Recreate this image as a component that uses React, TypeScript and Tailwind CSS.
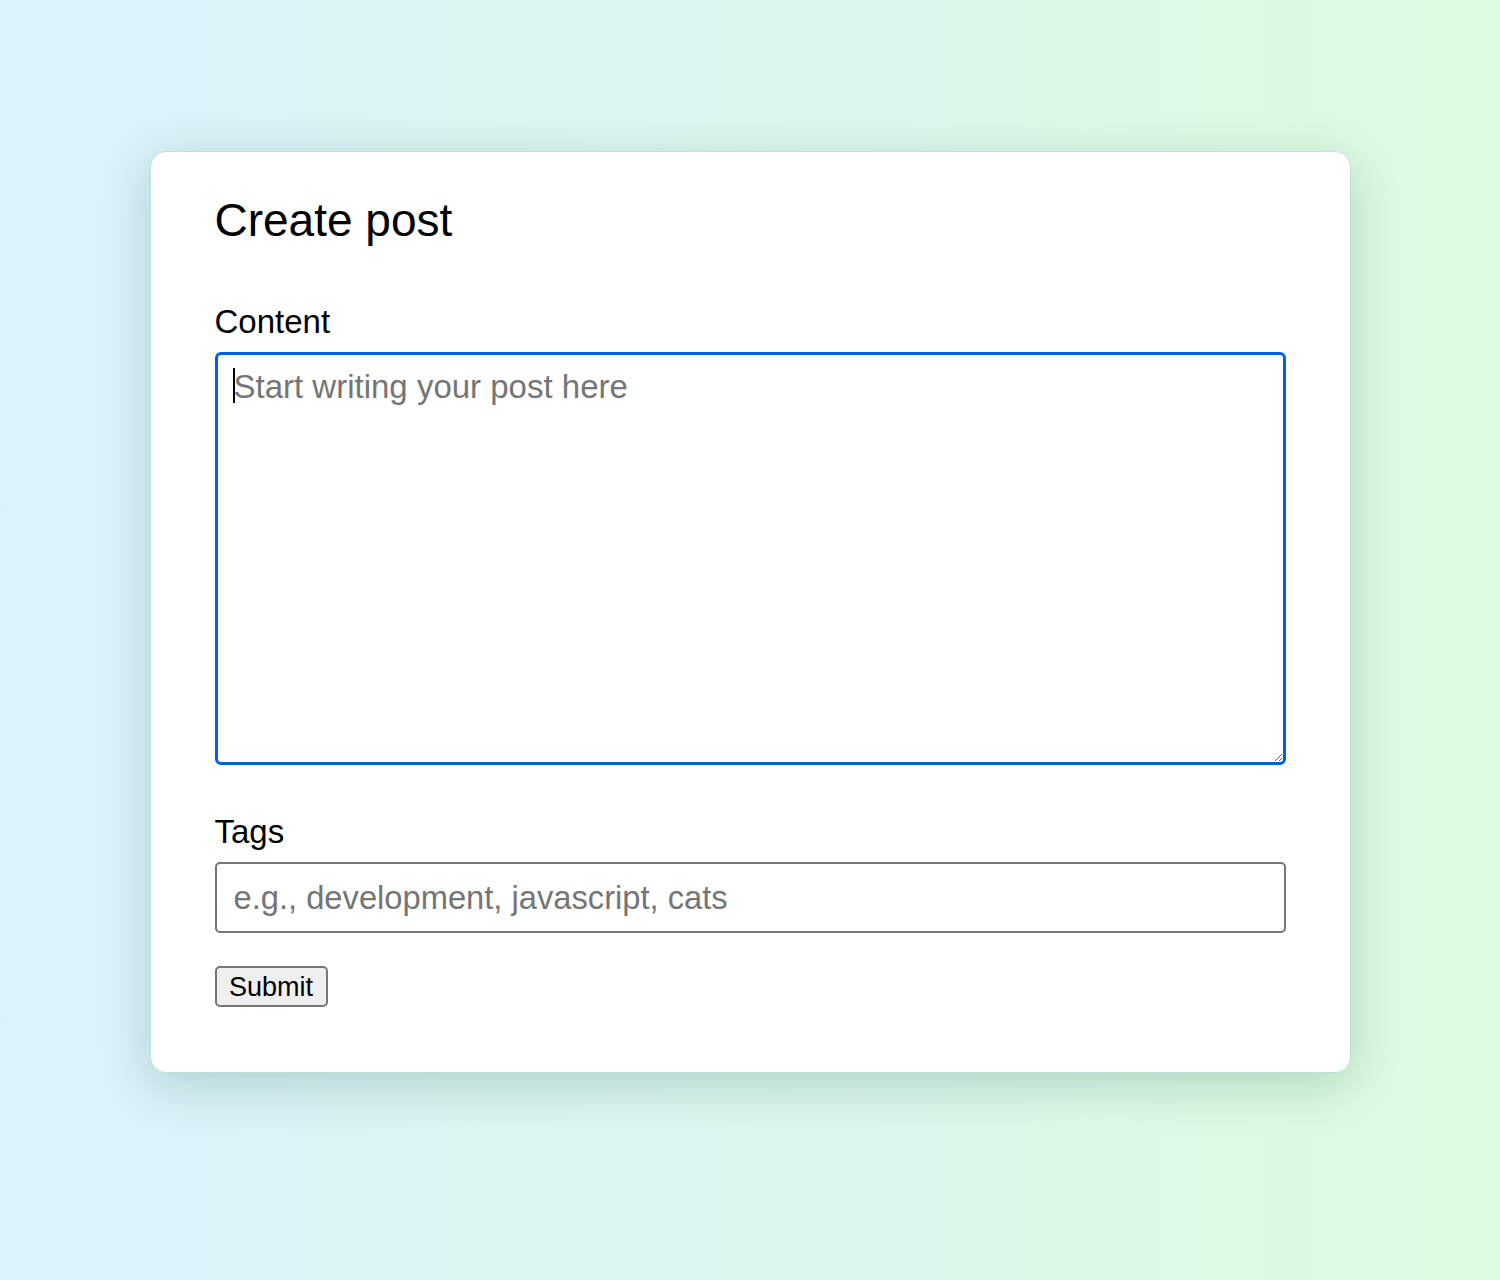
import React from "react";

export default function App() {
  return (
    <div
      className="min-h-screen w-full bg-gradient-to-r from-[#daf2fc] to-[#ddfcdf] pt-[151px] pb-[100px]"
      style={{ fontFamily: '"Liberation Sans", Arial, Helvetica, sans-serif' }}
    >
      <div className="mx-auto w-[1201px] rounded-[16px] border border-[#c4ddd6] bg-white px-[64px] pt-[42px] pb-[65px] shadow-[0_12px_50px_rgba(0,70,50,0.2)]">
        <h1 className="text-[46px] leading-[52px] text-black font-normal">Create post</h1>

        <label className="mt-[57px] block text-[33px] leading-[37px] text-black">Content</label>
        <div className="relative mt-[12px]">
          <textarea
            placeholder="Start writing your post here"
            className="block h-[413px] w-full rounded-[6px] border-[3px] border-[#0060df] bg-white px-[16px] pt-[13px] text-[33px] leading-[37px] text-black outline-none placeholder:text-[#757575]"
          />
          <span className="pointer-events-none absolute left-[18px] top-[16px] h-[35px] w-[2px] bg-black" />
        </div>

        <label className="mt-[48px] block text-[33px] leading-[37px] text-black">Tags</label>
        <input
          type="text"
          placeholder="e.g., development, javascript, cats"
          className="mt-[12px] block h-[71px] w-full rounded-[5px] border-2 border-[#767676] bg-white px-[17px] text-[32.7px] text-black outline-none placeholder:text-[#757575]"
        />

        <button
          type="button"
          className="mt-[33px] block h-[41px] w-[113px] rounded-[5px] border-2 border-[#767676] bg-[#efefef] text-[27px] leading-[30px] text-black"
        >
          Submit
        </button>
      </div>
    </div>
  );
}
